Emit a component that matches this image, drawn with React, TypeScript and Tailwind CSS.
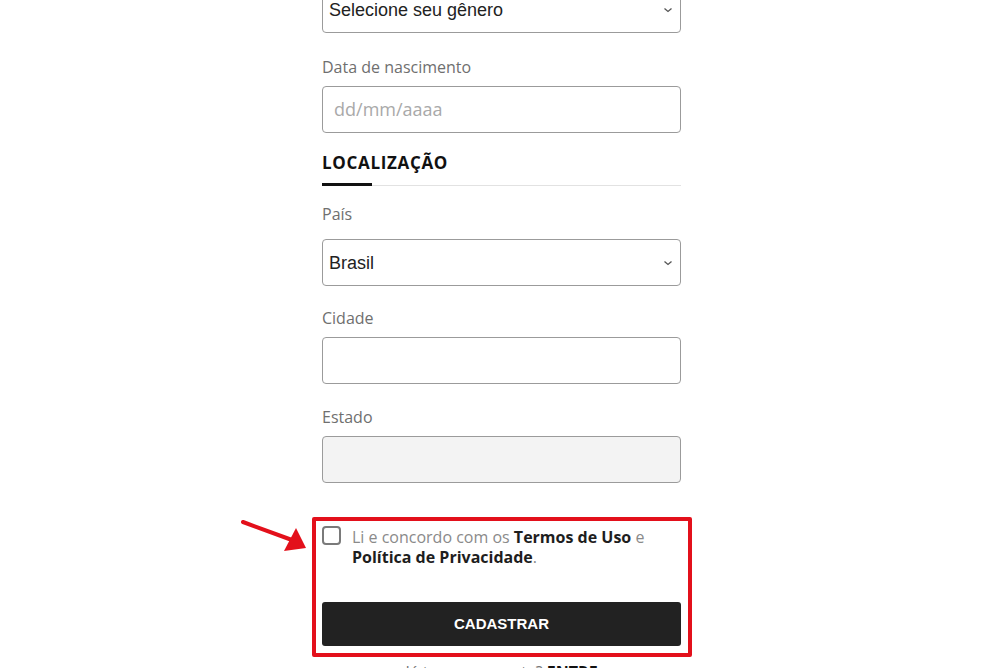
import React from 'react';

const labelCls = "block text-[16px] leading-6 text-[#6f6f6f] font-['Open_Sans',sans-serif]";
const boxCls = 'h-[47px] w-full rounded-[4px] border-[1.5px] border-[#9b9b9b]';

function Chevron() {
  return (
    <svg className="absolute right-[7px] top-1/2 -translate-y-1/2" width="10" height="6" viewBox="0 0 10 6">
      <path d="M1.5 1.5 L5 4.5 L8.5 1.5" fill="none" stroke="#555" strokeWidth="1.3" />
    </svg>
  );
}

function SelectBox({ value }: { value: string }) {
  return (
    <div className={`${boxCls} relative flex items-center bg-white pl-[6px] pt-[2px]`}>
      <span className="text-[18px] text-[#222] font-['Liberation_Sans',Arial,sans-serif]">{value}</span>
      <Chevron />
    </div>
  );
}

export default function App() {
  return (
    <div className="h-[668px] w-[984px] overflow-hidden bg-white">
      <div className="ml-[322px] mt-[-14px] w-[359px] font-['Open_Sans',sans-serif]">
        <SelectBox value="Selecione seu gênero" />

        {/* Data de nascimento */}
        <div className="mt-[22px]">
          <label className={labelCls}>Data de nascimento</label>
          <div className={`${boxCls} mt-[7px] flex items-center bg-white pl-[11px]`}>
            <span className="text-[18px] text-[#a9a9a9]">dd/mm/aaaa</span>
          </div>
        </div>

        {/* Localização */}
        <h2 className="mt-[18px] text-[17px] leading-6 font-bold tracking-[0.04em] text-[#111]">LOCALIZAÇÃO</h2>
        <div className="mt-[8px] flex items-end">
          <div className="h-[3px] w-[50px] bg-[#111]" />
          <div className="h-px flex-1 bg-[#e2e2e2]" />
        </div>

        <div className="mt-[16px]">
          <label className={labelCls}>País</label>
          <div className="mt-[13px]">
            <SelectBox value="Brasil" />
          </div>
        </div>

        <div className="mt-[20px]">
          <label className={labelCls}>Cidade</label>
          <div className={`${boxCls} mt-[7px] bg-white`} />
        </div>

        <div className="mt-[21px]">
          <label className={labelCls}>Estado</label>
          <div className={`${boxCls} mt-[7px] bg-[#f3f3f3]`} />
        </div>

        {/* Termos + botão (destacado) */}
        <div className="relative mt-[43px]">
          <div className="pointer-events-none absolute -left-[10px] -right-[11px] -top-[9px] -bottom-[11px] rounded-[2px] border-4 border-[#e3101b]" />
          <svg className="absolute -left-[82px] -top-[8px]" width="68" height="36" viewBox="0 0 68 36">
            <line x1="3" y1="4" x2="52" y2="22" stroke="#e3101b" strokeWidth="4" strokeLinecap="round" />
            <polygon points="66,30 44,33 56,10" fill="#e3101b" />
          </svg>

          <div className="flex items-start gap-[11px]">
            <div className="h-[19px] w-[19px] shrink-0 rounded-[4px] border-2 border-[#7a7a7a] bg-white" />
            <p className="mt-px text-[16px] leading-5 text-[#8a8a8a]">
              Li e concordo com os <strong className="font-bold text-[#1e1e1e]">Termos de Uso</strong> e{' '}
              <strong className="font-bold text-[#1e1e1e]">Política de Privacidade</strong>.
            </p>
          </div>

          <button className="mt-[35px] flex h-[44px] w-full items-center justify-center rounded-[3px] bg-[#222] text-[15px] font-bold text-white font-['Liberation_Sans',Arial,sans-serif]">
            CADASTRAR
          </button>
        </div>

        <p className="mt-[14px] text-center text-[16px] leading-6 text-[#777]">
          Já tem uma conta? <strong className="font-bold text-[#111]">ENTRE</strong>
        </p>
      </div>
    </div>
  );
}
